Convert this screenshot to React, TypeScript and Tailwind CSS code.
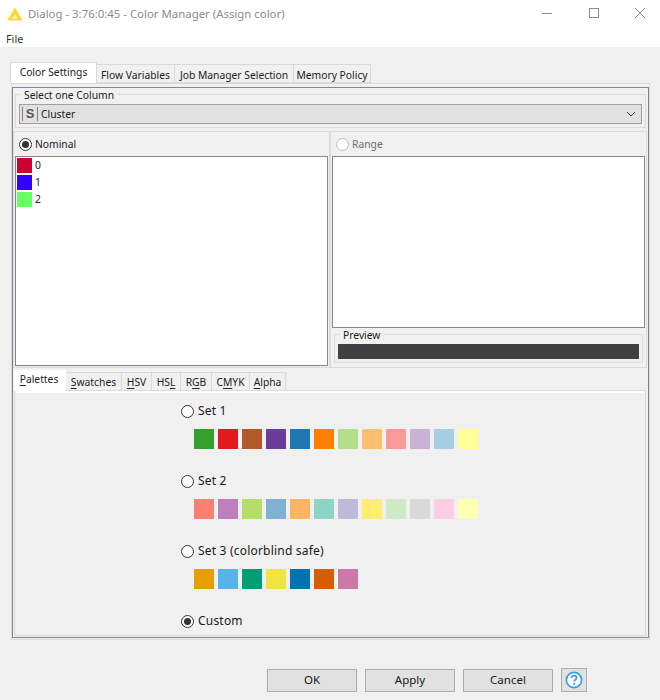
import React from "react";

const SET_1 = ["#33a02c", "#e31a1c", "#b15928", "#6a3d9a", "#1f78b4", "#ff7f00", "#b2df8a", "#fdbf6f", "#fb9a99", "#cab2d6", "#a6cee3", "#ffff99"];
const SET_2 = ["#fb8072", "#bc80bd", "#b3de69", "#80b1d3", "#fdb462", "#8dd3c7", "#bebada", "#ffed6f", "#ccebc5", "#d9d9d9", "#fccde5", "#ffffb3"];
const SET_3 = ["#e69f00", "#56b4e9", "#009e73", "#f0e442", "#0072b2", "#d55e00", "#cc79a7"];

const NOMINAL = [
  { label: "0", color: "#cc0033" },
  { label: "1", color: "#3300ff" },
  { label: "2", color: "#66ff66" },
];

const Radio: React.FC<{ checked?: boolean; disabled?: boolean }> = ({ checked, disabled }) => (
  <span
    className={`flex h-[13px] w-[13px] shrink-0 items-center justify-center rounded-full border bg-white ${
      disabled ? "border-[#bcbcbc]" : "border-[#333333]"
    }`}
  >
    {checked && <span className="h-[7px] w-[7px] rounded-full bg-[#333333]" />}
  </span>
);

const PaletteOption: React.FC<{ label: string; colors?: string[]; checked?: boolean }> = ({ label, colors, checked }) => (
  <div>
    <div className="flex h-4 items-center gap-1 text-[12px] tracking-[0.2px] text-[#1a1a1a]">
      <Radio checked={checked} />
      <span>{label}</span>
    </div>
    {colors && (
      <div className="ml-[13px] mt-[10px] flex gap-1">
        {colors.map((color) => (
          <span key={color} className="h-5 w-5" style={{ backgroundColor: color }} />
        ))}
      </div>
    )}
  </div>
);

const Underlined: React.FC<{ before?: string; mark: string; after?: string }> = ({ before, mark, after }) => (
  <>
    {before}
    <span className="underline underline-offset-2">{mark}</span>
    {after}
  </>
);

const DialogButton: React.FC<{ children: React.ReactNode }> = ({ children }) => (
  <button className="h-[23px] w-[90px] border border-[#adadad] bg-[#e1e1e1] text-[11.5px] text-[#1a1a1a]">{children}</button>
);

export default function App() {
  return (
    <div
      className="flex h-[700px] w-[660px] flex-col overflow-hidden whitespace-nowrap bg-[#f0f0f0] text-[10.3px] leading-4 text-[#222222]"
      style={{ fontFamily: '"Noto Sans", sans-serif' }}
    >
      {/* Title bar */}
      <div className="flex h-6 shrink-0 items-center bg-white pt-[2px]">
        <svg width="16" height="14" viewBox="0 0 16 14" className="ml-[7px] mr-[5px] mt-[2px]">
          <path d="M8 0.5 L15.8 13.5 H0.2 Z" fill="#fdd835" />
          <path d="M8 7 L10.6 11.5 H5.4 Z" fill="#fff8d0" />
        </svg>
        <span className="mt-[2px] text-[11.4px] text-[#8c8c8c]">Dialog - 3:76:0:45 - Color Manager (Assign color)</span>
        <div className="ml-auto flex items-center">
          <svg width="12" height="12" viewBox="0 0 12 12" className="mr-[35px]">
            <path d="M1 6.5 H11" stroke="#8a8a8a" fill="none" />
          </svg>
          <svg width="12" height="12" viewBox="0 0 12 12" className="mr-[34px]">
            <rect x="1.5" y="1.5" width="9" height="9" stroke="#8a8a8a" fill="none" />
          </svg>
          <svg width="12" height="12" viewBox="0 0 12 12" className="mr-[14px]">
            <path d="M1 1 L11 11 M11 1 L1 11" stroke="#8a8a8a" fill="none" />
          </svg>
        </div>
      </div>

      {/* Menu */}
      <div className="flex h-[23px] shrink-0 items-center bg-white pl-[6px] pt-[6px] text-[10.8px] text-[#333333]">File</div>

      <div className="flex flex-1 flex-col pl-[10px] pt-4">
        {/* Top tabs */}
        <div className="relative z-10 flex h-[20px] items-end">
          <div className="flex h-[21px] w-[87px] items-center justify-center border border-b-0 border-[#d9d9d9] bg-white pb-[2px]">
            Color Settings
          </div>
          <div className="flex h-[19px] w-[78px] items-center justify-center border-y border-r border-[#d9d9d9] pt-[2px]">
            Flow Variables
          </div>
          <div className="flex h-[19px] w-[119px] items-center justify-center border-y border-r border-[#d9d9d9] pt-[2px]">
            Job Manager Selection
          </div>
          <div className="flex h-[19px] w-[77px] items-center justify-center border-y border-r border-[#d9d9d9] pt-[2px]">
            Memory Policy
          </div>
        </div>

        {/* Tab pane */}
        <div className="ml-[1px] h-[557px] w-[639px] border border-[#d9d9d9] pt-[3px]">
          <div className="flex h-[551px] flex-col border border-[#828790] pt-[1px]">
            <fieldset className="mx-[2px] h-[39px] w-[631px] border border-[#dcdcdc] px-[3px]">
              <legend className="ml-[2px] h-[10px] px-[3px] leading-[12px]">Select one Column</legend>
              <div className="mt-[5px] flex h-5 items-center border border-[#a0a0a0] bg-[#e1e1e1] pl-[2px]">
                <span
                  className="flex h-[14px] w-[16px] items-center justify-center border-x border-[#808080] text-[13px] font-bold text-[#555555]"
                  style={{ fontFamily: '"Liberation Sans", sans-serif' }}
                >
                  S
                </span>
                <span className="ml-[3px]">Cluster</span>
                <svg width="10" height="6" viewBox="0 0 10 6" className="ml-auto mr-[5px]">
                  <path d="M1 1 L5 5 L9 1" stroke="#444444" fill="none" />
                </svg>
              </div>
            </fieldset>

            <div className="mt-[3px] flex h-[237px]">
              <div className="flex w-[317px] flex-col border border-[#dcdcdc] px-[1px]">
                <div className="flex h-6 items-center gap-[3px] pl-[4px]">
                  <Radio checked />
                  <span>Nominal</span>
                </div>
                <div className="h-[210px] border border-[#828790] bg-white px-[1px] pt-[1px]">
                  {NOMINAL.map((item) => (
                    <div key={item.label} className="flex h-[17px] items-start gap-[3px]">
                      <span className="h-[15px] w-[15px]" style={{ backgroundColor: item.color }} />
                      <span className="leading-[15px]">{item.label}</span>
                    </div>
                  ))}
                </div>
              </div>

              <div className="flex w-[317px] flex-col border border-[#dcdcdc] px-[1px]">
                <div className="flex h-6 items-center gap-[3px] pl-[4px] text-[#6d6d6d]">
                  <Radio disabled />
                  <span>Range</span>
                </div>
                <div className="h-[172px] border border-[#828790] bg-white" />
                <fieldset className="mx-[2px] mt-[1px] h-[34px] border border-[#dcdcdc] px-[3px]">
                  <legend className="ml-[2px] h-[10px] px-[3px] leading-[12px]">Preview</legend>
                  <div className="mt-[5px] h-[15px] bg-[#404040]" />
                </fieldset>
              </div>
            </div>

            {/* Bottom tabs */}
            <div className="relative z-10 mt-[2px] -mb-px ml-[1px] flex h-[21px] items-end">
              <div className="flex h-[21px] w-[52px] items-center justify-center bg-white pb-[3px] pr-[2px]">
                <Underlined mark="P" after="alettes" />
              </div>
              <div className="flex h-[19px] w-[56px] items-center justify-center border-y border-r border-[#d9d9d9]">
                <Underlined mark="S" after="watches" />
              </div>
              <div className="flex h-[19px] w-[30px] items-center justify-center border-y border-r border-[#d9d9d9]">
                <Underlined mark="H" after="SV" />
              </div>
              <div className="flex h-[19px] w-[29px] items-center justify-center border-y border-r border-[#d9d9d9]">
                <Underlined before="HS" mark="L" />
              </div>
              <div className="flex h-[19px] w-[31px] items-center justify-center border-y border-r border-[#d9d9d9]">
                <Underlined before="R" mark="G" after="B" />
              </div>
              <div className="flex h-[19px] w-[38px] items-center justify-center border-y border-r border-[#d9d9d9]">
                <Underlined before="C" mark="M" after="YK" />
              </div>
              <div className="flex h-[19px] w-[36px] items-center justify-center border-y border-r border-[#d9d9d9]">
                <Underlined mark="A" after="lpha" />
              </div>
            </div>

            <div className="ml-[1px] h-[246px] w-[632px] border border-[#d9d9d9]">
              <div className="flex h-full flex-col gap-6 border-t-2 border-white pl-[166px] pt-[10px]">
                <PaletteOption label="Set 1" colors={SET_1} />
                <PaletteOption label="Set 2" colors={SET_2} />
                <PaletteOption label="Set 3 (colorblind safe)" colors={SET_3} />
                <PaletteOption label="Custom" checked />
              </div>
            </div>
          </div>
        </div>

        {/* Dialog buttons */}
        <div className="mt-[28px] flex items-center pl-[257px]">
          <DialogButton>OK</DialogButton>
          <span className="w-2" />
          <DialogButton>Apply</DialogButton>
          <span className="w-2" />
          <DialogButton>Cancel</DialogButton>
          <span className="ml-2 flex h-[24px] w-[26px] items-center justify-center border border-[#adadad] bg-[#e1e1e1]">
            <svg width="18" height="18" viewBox="0 0 18 18">
              <circle cx="9" cy="9" r="7.6" fill="#ffffff" stroke="#2f9be8" strokeWidth="1.6" />
              <path d="M6.6 7 C6.6 5.4 7.8 4.7 9 4.7 C10.4 4.7 11.5 5.6 11.5 6.9 C11.5 8.6 9.2 8.8 9.2 10.6" fill="none" stroke="#2f9be8" strokeWidth="1.7" />
              <circle cx="9.2" cy="13" r="1.1" fill="#2f9be8" />
            </svg>
          </span>
        </div>
      </div>
    </div>
  );
}
